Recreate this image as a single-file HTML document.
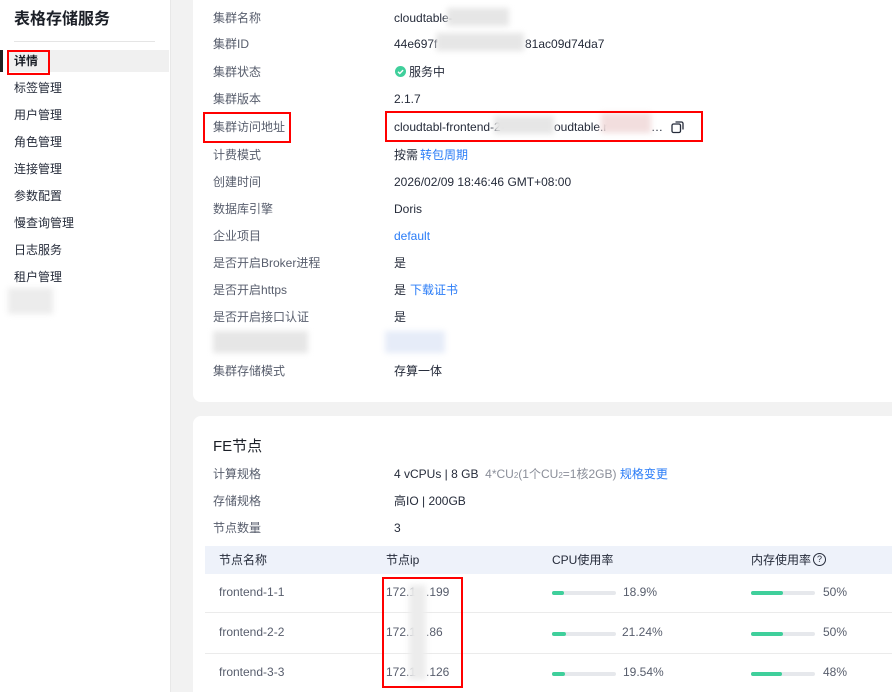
<!DOCTYPE html>
<html><head><meta charset="utf-8"><style>
*{margin:0;padding:0;box-sizing:border-box}
html,body{width:892px;height:692px;overflow:hidden}
body{background:#f2f2f2;font-family:"Liberation Sans","Noto Sans CJK SC",sans-serif;font-size:12px;color:#252b3a;position:relative}
.side{position:absolute;left:0;top:0;width:171px;height:692px;background:#fff;border-right:1px solid #e8e8e8}
.t{position:absolute;white-space:nowrap;line-height:16px;height:16px}
.lab{color:#575d6c}
.blue{color:#2a7cf7}
.card{position:absolute;left:193px;width:710px;background:#fff;border-radius:8px}
.red{position:absolute;border:2px solid #f00}
.blur{position:absolute;background:#e6e6e6;filter:blur(3px)}
.bar{position:absolute;width:64px;height:4px;background:#e6e8ec;border-radius:2px}
.bar i{display:block;height:4px;background:#3fcf9b;border-radius:2px}
</style></head><body>
<div class="side">
<div class="t" style="left:14px;top:10px;font-size:16px;font-weight:bold;color:#1b1f27;line-height:20px;height:20px">表格存储服务</div>
<div style="position:absolute;left:14px;top:41px;width:141px;height:1px;background:#e5e5e5"></div>
<div style="position:absolute;left:8px;top:50px;width:161px;height:22px;background:#f0f0f0"></div>
<div style="position:absolute;left:0;top:50px;width:3px;height:22px;background:#222"></div>
<div class="t" style="left:14px;top:53px;font-weight:bold;color:#1b1f27">详情</div>
<div class="red" style="left:7px;top:50px;width:43px;height:25px"></div>
<div class="t" style="left:14px;top:80px">标签管理</div>
<div class="t" style="left:14px;top:107px">用户管理</div>
<div class="t" style="left:14px;top:134px">角色管理</div>
<div class="t" style="left:14px;top:161px">连接管理</div>
<div class="t" style="left:14px;top:188px">参数配置</div>
<div class="t" style="left:14px;top:215px">慢查询管理</div>
<div class="t" style="left:14px;top:242px">日志服务</div>
<div class="t" style="left:14px;top:269px">租户管理</div>
<div class="blur" style="left:8px;top:288px;width:45px;height:26px;background:#ececec"></div>
</div>

<div class="card" style="top:-10px;height:412px"></div>
<div class="card" style="top:416px;height:290px"></div>

<div class="t lab" style="left:213px;top:10px">集群名称</div><div class="t" style="left:394px;top:10px">cloudtable-</div><div class="blur" style="left:447px;top:8px;width:62px;height:18px"></div>
<div class="t lab" style="left:213px;top:36px">集群ID</div><div class="t" style="left:394px;top:36px">44e697f</div><div class="t" style="left:525px;top:36px">81ac09d74da7</div><div class="blur" style="left:436px;top:33px;width:88px;height:18px"></div>
<div class="t lab" style="left:213px;top:64px">集群状态</div><div style="position:absolute;left:395px;top:66px;width:11px;height:11px;border-radius:50%;background:#3fcf9b"></div><svg style="position:absolute;left:395px;top:66px" width="11" height="11"><path d="M3 5.7l1.8 1.8 3.3-3.4" stroke="#fff" stroke-width="1.4" fill="none"/></svg><div class="t" style="left:409px;top:64px">服务中</div>
<div class="t lab" style="left:213px;top:91px">集群版本</div><div class="t" style="left:394px;top:91px">2.1.7</div>
<div class="t lab" style="left:213px;top:119px">集群访问地址</div><div class="red" style="left:203px;top:112px;width:88px;height:31px"></div>
<div class="t" style="left:394px;top:119px">cloudtabl-frontend-2-</div><div class="t" style="left:554px;top:119px">oudtable.r</div><div class="t" style="left:651px;top:119px">…</div>
<div class="blur" style="left:494px;top:116px;width:60px;height:18px"></div><div class="blur" style="left:601px;top:113px;width:50px;height:20px;background:#f2dede"></div>
<svg style="position:absolute;left:671px;top:120px" width="14" height="14"><rect x="1" y="4" width="8.5" height="8.5" rx="1.5" stroke="#252b3a" stroke-width="1.3" fill="none"/><path d="M4.5 2h6a1.5 1.5 0 0 1 1.5 1.5v6" stroke="#252b3a" stroke-width="1.3" fill="none"/></svg>
<div class="red" style="left:385px;top:111px;width:318px;height:31px"></div>
<div class="t lab" style="left:213px;top:147px">计费模式</div><div class="t" style="left:394px;top:147px">按需</div><div class="t blue" style="left:420px;top:147px">转包周期</div>
<div class="t lab" style="left:213px;top:174px">创建时间</div><div class="t" style="left:394px;top:174px">2026/02/09 18:46:46 GMT+08:00</div>
<div class="t lab" style="left:213px;top:201px">数据库引擎</div><div class="t" style="left:394px;top:201px">Doris</div>
<div class="t lab" style="left:213px;top:228px">企业项目</div><div class="t blue" style="left:394px;top:228px">default</div>
<div class="t lab" style="left:213px;top:255px">是否开启Broker进程</div><div class="t" style="left:394px;top:255px">是</div>
<div class="t lab" style="left:213px;top:282px">是否开启https</div><div class="t" style="left:394px;top:282px">是</div><div class="t blue" style="left:410px;top:282px">下载证书</div>
<div class="t lab" style="left:213px;top:309px">是否开启接口认证</div><div class="t" style="left:394px;top:309px">是</div>
<div class="blur" style="left:213px;top:331px;width:95px;height:22px"></div><div class="blur" style="left:385px;top:331px;width:60px;height:22px;background:#e6ecf8"></div>
<div class="t lab" style="left:213px;top:363px">集群存储模式</div><div class="t" style="left:394px;top:363px">存算一体</div>

<div class="t" style="left:213px;top:437px;font-size:15px;color:#1b1f27;line-height:20px;height:20px">FE节点</div>
<div class="t lab" style="left:213px;top:466px">计算规格</div><div class="t" style="left:394px;top:466px">4 vCPUs | 8 GB &nbsp;<span style="color:#8a8e99">4*CU<span style="font-size:8px">2</span>(1个CU<span style="font-size:8px">2</span>=1核2GB)</span> <span class="blue">规格变更</span></div>
<div class="t lab" style="left:213px;top:493px">存储规格</div><div class="t" style="left:394px;top:493px">高IO | 200GB</div>
<div class="t lab" style="left:213px;top:520px">节点数量</div><div class="t" style="left:394px;top:520px">3</div>

<div style="position:absolute;left:205px;top:546px;width:687px;height:28px;background:#eef2fa"></div>
<div class="t" style="left:219px;top:552px">节点名称</div>
<div class="t" style="left:386px;top:552px">节点ip</div>
<div class="t" style="left:552px;top:552px">CPU使用率</div>
<div class="t" style="left:751px;top:552px">内存使用率</div>
<div style="position:absolute;left:813px;top:553px;width:13px;height:13px;border:1px solid #252b3a;border-radius:50%;font-size:9px;text-align:center;line-height:11px">?</div>
<div style="position:absolute;left:205px;top:612px;width:687px;height:1px;background:#ebebeb"></div>
<div style="position:absolute;left:205px;top:653px;width:687px;height:1px;background:#ebebeb"></div>

<div class="t lab" style="left:219px;top:584px">frontend-1-1</div>
<div class="t lab" style="left:219px;top:624px">frontend-2-2</div>
<div class="t lab" style="left:219px;top:664px">frontend-3-3</div>
<div class="t lab" style="left:386px;top:584px">172.1</div><div class="t lab" style="left:426px;top:584px">.199</div>
<div class="t lab" style="left:386px;top:624px">172.1</div><div class="t lab" style="left:426px;top:624px">.86</div>
<div class="t lab" style="left:386px;top:664px">172.1</div><div class="t lab" style="left:426px;top:664px">.126</div>
<div class="blur" style="left:409px;top:585px;width:17px;height:95px;background:#ececec"></div>
<div class="red" style="left:382px;top:577px;width:81px;height:111px"></div>

<div class="bar" style="left:552px;top:591px"><i style="width:12px"></i></div><div class="t lab" style="left:623px;top:584px">18.9%</div>
<div class="bar" style="left:552px;top:632px"><i style="width:14px"></i></div><div class="t lab" style="left:622px;top:624px">21.24%</div>
<div class="bar" style="left:552px;top:672px"><i style="width:13px"></i></div><div class="t lab" style="left:623px;top:664px">19.54%</div>
<div class="bar" style="left:751px;top:591px"><i style="width:32px"></i></div><div class="t lab" style="left:823px;top:584px">50%</div>
<div class="bar" style="left:751px;top:632px"><i style="width:32px"></i></div><div class="t lab" style="left:823px;top:624px">50%</div>
<div class="bar" style="left:751px;top:672px"><i style="width:31px"></i></div><div class="t lab" style="left:823px;top:664px">48%</div>
</body></html>
